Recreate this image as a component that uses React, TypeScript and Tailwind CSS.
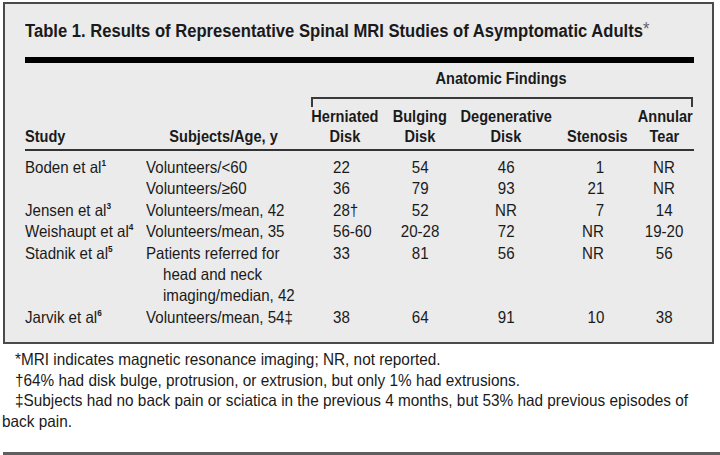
import React from "react";

const F = "font-['Liberation_Sans','Arial',sans-serif]";

const cols = "grid grid-cols-[121px_159px_80px_70px_102px_78px_58px]";

// Condensed text helpers (real text, narrowed horizontally)
const L = ({ children }: { children: React.ReactNode }) => (
  <span className="inline-block whitespace-nowrap origin-left scale-x-[0.915]">{children}</span>
);
const C = ({ children }: { children: React.ReactNode }) => (
  <span className="inline-block whitespace-nowrap origin-center scale-x-[0.915]">{children}</span>
);
const R = ({ children }: { children: React.ReactNode }) => (
  <span className="inline-block whitespace-nowrap origin-right scale-x-[0.915]">{children}</span>
);
const HC = ({ children }: { children: React.ReactNode }) => (
  <span className="inline-block whitespace-nowrap origin-center scale-x-[0.91]">{children}</span>
);
const HL = ({ children }: { children: React.ReactNode }) => (
  <span className="inline-block whitespace-nowrap origin-left scale-x-[0.91]">{children}</span>
);
const FN = ({ children }: { children: React.ReactNode }) => (
  <span className="inline-block whitespace-nowrap origin-left scale-x-[0.93]">{children}</span>
);

const Sup = ({ n }: { n: string }) => (
  <span className="text-[9px] leading-none align-top relative top-[2px] font-bold">{n}</span>
);

type Row = { study?: React.ReactNode; subj: React.ReactNode; v: string[] };

const rows: Row[] = [
  { study: <>Boden et al<Sup n="1" /></>, subj: "Volunteers/<60", v: ["22", "54", "46", "1", "NR"] },
  { subj: "Volunteers/≥60", v: ["36", "79", "93", "21", "NR"] },
  { study: <>Jensen et al<Sup n="3" /></>, subj: "Volunteers/mean, 42", v: ["28†", "52", "NR", "7", "14"] },
  { study: <>Weishaupt et al<Sup n="4" /></>, subj: "Volunteers/mean, 35", v: ["56-60", "20-28", "72", "NR", "19-20"] },
  {
    study: <>Stadnik et al<Sup n="5" /></>,
    subj: (
      <div>
        <div><L>Patients referred for</L></div>
        <div className="pl-[17px]"><L>head and neck</L></div>
        <div className="pl-[17px]"><L>imaging/median, 42</L></div>
      </div>
    ),
    v: ["33", "81", "56", "NR", "56"],
  },
  { study: <>Jarvik et al<Sup n="6" /></>, subj: "Volunteers/mean, 54‡", v: ["38", "64", "91", "10", "38"] },
];

export default function App() {
  return (
    <div className={`w-[720px] h-[455px] bg-white text-[#1a1a1a] ${F} overflow-hidden relative`}>
      <div className="ml-[3px] mt-[2px] w-[711px] h-[342px] border-2 border-[#4a4a4a] bg-[#ebebeb] pl-[20px] pr-[18px]">
        <div className="pt-[16px] text-[18px] leading-[22px] font-bold">
          <span className="inline-block whitespace-nowrap origin-left scale-x-[0.923]">
            Table 1. Results of Representative Spinal MRI Studies of Asymptomatic Adults
            <span className="font-normal text-[#666] relative -top-[2px]">*</span>
          </span>
        </div>
        <div className="mt-[15px] h-[6px] bg-black" />
        <div className={`${cols} font-bold text-[16px]`}>
          <div className="col-start-3 col-span-5 text-center leading-[20px] pt-[6px] pl-[4px]">
            <HC>Anatomic Findings</HC>
          </div>
          <div className="col-start-3 col-span-5 mt-[8px] ml-[6px] h-[10px] border-t-2 border-l-2 border-r-2 border-[#3a3a3a]" />
        </div>
        <div className={`${cols} font-bold text-[16px] leading-[20px] pb-[2px] border-b-2 border-[#333]`}>
          <div className="self-end"><HL>Study</HL></div>
          <div className="self-end text-center pr-[4px]"><HC>Subjects/Age, y</HC></div>
          <div className="text-center"><HC>Herniated</HC><br /><HC>Disk</HC></div>
          <div className="text-center"><HC>Bulging</HC><br /><HC>Disk</HC></div>
          <div className="text-center"><HC>Degenerative</HC><br /><HC>Disk</HC></div>
          <div className="self-end text-center pl-[2px]"><HC>Stenosis</HC></div>
          <div className="text-center"><HC>Annular</HC><br /><HC>Tear</HC></div>
        </div>
        <div className="pt-[6px] text-[16.5px] leading-[21.4px]">
          {rows.map((r, i) => (
            <div key={i} className={cols}>
              <div><L>{r.study}</L></div>
              <div>{typeof r.subj === "string" ? <L>{r.subj}</L> : r.subj}</div>
              <div className="pl-[28px]"><L>{r.v[0]}</L></div>
              <div className="text-center"><C>{r.v[1]}</C></div>
              <div className="text-center"><C>{r.v[2]}</C></div>
              <div className="text-right pr-[31px]"><R>{r.v[3]}</R></div>
              <div className="text-center"><C>{r.v[4]}</C></div>
            </div>
          ))}
        </div>
      </div>
      <div className="pt-[5px] text-[16.5px] leading-[20.7px]">
        <div className="pl-[15px]">
          <FN>*MRI indicates magnetic resonance imaging; NR, not reported.</FN>
        </div>
        <div className="pl-[15px]">
          <FN>†64% had disk bulge, protrusion, or extrusion, but only 1% had extrusions.</FN>
        </div>
        <div className="pl-[15px]">
          <FN>‡Subjects had no back pain or sciatica in the previous 4 months, but 53% had previous episodes of</FN>
        </div>
        <div className="pl-[2px]">
          <FN>back pain.</FN>
        </div>
      </div>
      <div className="absolute left-[3px] right-[0px] top-[452px] h-[3px] bg-[#5f5f5f]" />
    </div>
  );
}
